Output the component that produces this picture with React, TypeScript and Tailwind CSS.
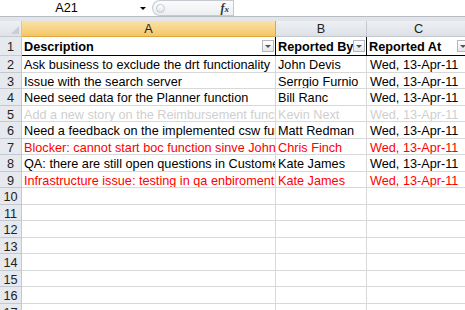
import React from "react";

type Row = { d: string; b: string; c: string; color: string };

const data: Row[] = [
  { d: "Ask business to exclude the drt functionality", b: "John Devis", c: "Wed, 13-Apr-11", color: "text-black" },
  { d: "Issue with the search server", b: "Serrgio Furnio", c: "Wed, 13-Apr-11", color: "text-black" },
  { d: "Need seed data for the Planner function", b: "Bill Ranc", c: "Wed, 13-Apr-11", color: "text-black" },
  { d: "Add a new story on the Reimbursement functionality", b: "Kevin Next", c: "Wed, 13-Apr-11", color: "text-[#cfcfcf]" },
  { d: "Need a feedback on the implemented csw functionality", b: "Matt Redman", c: "Wed, 13-Apr-11", color: "text-black" },
  { d: "Blocker: cannot start boc function sinve John is out", b: "Chris Finch", c: "Wed, 13-Apr-11", color: "text-[#ff0000]" },
  { d: "QA: there are still open questions in Customer module", b: "Kate James", c: "Wed, 13-Apr-11", color: "text-black" },
  { d: "Infrastructure issue: testing in qa enbiroment is blocked", b: "Kate James", c: "Wed, 13-Apr-11", color: "text-[#ff0000]" },
];

function FilterBtn() {
  return (
    <div className="absolute right-[1px] top-[3px] w-[12px] h-[12px] border border-[#b4b8be] bg-gradient-to-b from-white to-[#e4e6ea] flex items-center justify-center">
      <div className="w-0 h-0 border-l-[3px] border-r-[3px] border-t-[3px] border-l-transparent border-r-transparent border-t-[#555]" />
    </div>
  );
}

export default function App() {
  const rowHeights = [17, 16, 17, 16, 17, 16, 17, 16, 17, 16, 17, 16, 17, 16, 17, 16];
  return (
    <div className="w-[465px] h-[310px] overflow-hidden bg-white font-['Liberation_Sans',Arial,sans-serif] text-[12.7px] leading-none">
      {/* formula bar */}
      <div className="flex h-[17px] bg-white border-b border-[#b8bcc2]">
        <div className="w-[133px] flex items-center justify-center text-[12.7px] text-black">A21</div>
        <div className="w-[19px] flex items-center justify-center">
          <div className="w-0 h-0 border-l-[3px] border-r-[3px] border-t-[3px] border-l-transparent border-r-transparent border-t-black" />
        </div>
        <div className="w-[81px] flex items-center rounded-l-[8px] border-l border-t border-b border-[#c6cad0] bg-gradient-to-b from-[#fbfbfc] to-[#eceef1] h-[16px]">
          <div className="ml-[3px] w-[9px] h-[9px] rounded-full border border-[#c4c8ce] bg-gradient-to-b from-white to-[#e0e3e7]" />
          <div className="ml-auto mr-[4px] font-['Liberation_Serif',serif] italic font-bold text-[12px] text-[#333]">
            f<span className="text-[9px]">x</span>
          </div>
        </div>
        <div className="flex-1 border-l border-[#c6cad0] bg-white" />
      </div>
      <div className="h-[4px] bg-[#e2e5e9]" />

      {/* column headers */}
      <div className="flex h-[16px]">
        <div className="w-[22px] shrink-0 relative bg-gradient-to-b from-[#eef0f3] to-[#dfe3e8] border-r border-b border-[#c4c9d0]">
          <svg className="absolute right-[2px] bottom-[2px]" width="8" height="8" viewBox="0 0 8 8">
            <polygon points="8,0 8,8 0,8" fill="#c9ced5" />
          </svg>
        </div>
        <div className="w-[254px] shrink-0 flex items-center justify-center pt-[1px] bg-gradient-to-b from-[#fbe2a8] to-[#f3c764] border-r border-b border-[#e0a63e] text-[#222]">A</div>
        <div className="w-[91px] shrink-0 flex items-center justify-center pt-[1px] bg-gradient-to-b from-[#eef0f3] to-[#dde1e6] border-r border-b border-[#c4c9d0] text-[#222]">B</div>
        <div className="w-[104px] shrink-0 flex items-center justify-center pt-[1px] bg-gradient-to-b from-[#eef0f3] to-[#dde1e6] border-r border-b border-[#c4c9d0] text-[#222]">C</div>
      </div>

      {/* row 1 */}
      <div className="flex h-[19px]">
        <div className="w-[22px] shrink-0 flex items-center justify-center bg-[#e6e9ed] border-r border-b border-[#c4c9d0] text-[#222] pt-[2px]">1</div>
        <div className="w-[254px] shrink-0 relative flex items-center pl-[2px] pt-[2px] font-bold text-black border-r border-b border-black overflow-hidden whitespace-nowrap">
          Description
          <FilterBtn />
        </div>
        <div className="w-[91px] shrink-0 relative flex items-center pl-[2px] pt-[2px] font-bold text-black border-r border-b border-black overflow-hidden whitespace-nowrap">
          Reported By
          <FilterBtn />
        </div>
        <div className="w-[104px] shrink-0 relative flex items-center pl-[2px] pt-[2px] font-bold text-black border-r border-b border-black overflow-hidden whitespace-nowrap">
          Reported At
          <FilterBtn />
        </div>
      </div>

      {rowHeights.map((h, i) => {
        const r = data[i];
        const n = i + 2;
        return (
          <div key={n} className="flex" style={{ height: h }}>
            <div className="w-[22px] shrink-0 flex items-center justify-center bg-[#e6e9ed] border-r border-b border-[#c4c9d0] text-[#222] pt-[3px]">{n}</div>
            <div className={`w-[254px] shrink-0 flex items-center pl-[2px] pt-[3px] border-r border-b border-[#d8d8d8] overflow-hidden whitespace-nowrap ${r ? r.color : ""}`}>{r ? r.d : ""}</div>
            <div className={`w-[91px] shrink-0 flex items-center pl-[2px] pt-[3px] border-r border-b border-[#d8d8d8] overflow-hidden whitespace-nowrap ${r ? r.color : ""}`}>{r ? r.b : ""}</div>
            <div className={`w-[104px] shrink-0 flex items-center pl-[3px] pt-[3px] border-r border-b border-[#d8d8d8] overflow-hidden whitespace-nowrap ${r ? r.color : ""}`}>{r ? r.c : ""}</div>
          </div>
        );
      })}
    </div>
  );
}
